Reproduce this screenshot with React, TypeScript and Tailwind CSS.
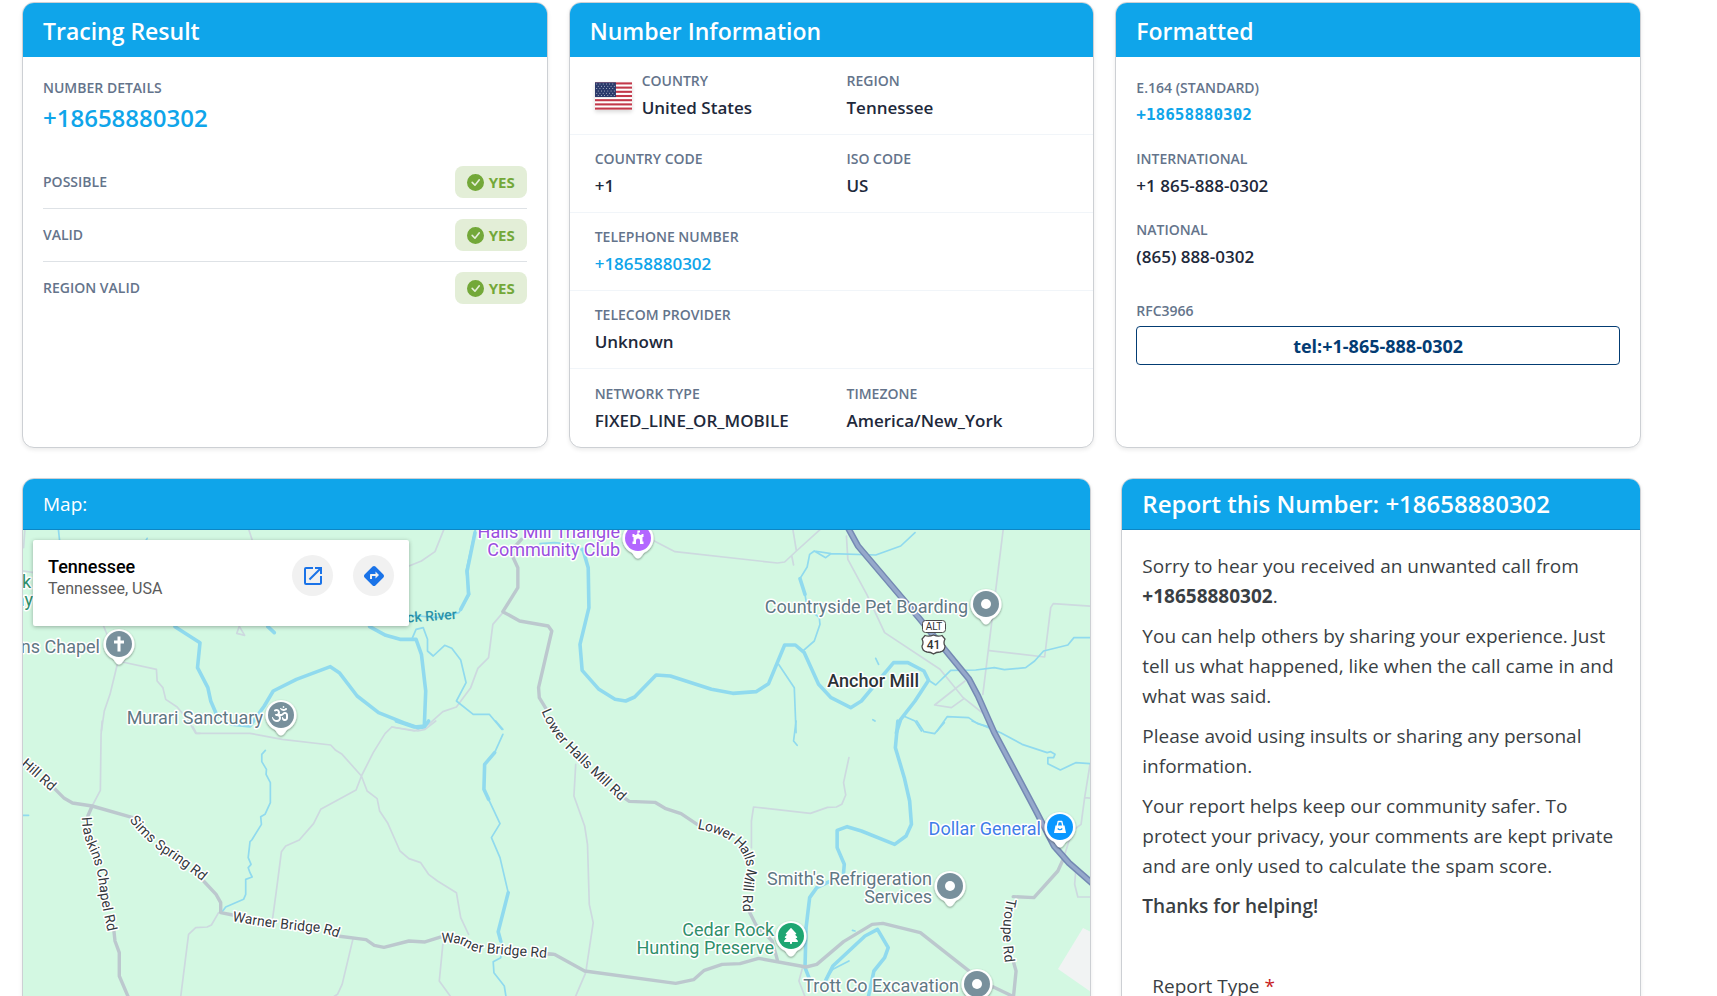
import type { ReactNode } from "react";
import { BsCheckCircleFill } from "react-icons/bs";
import { FaCross, FaOm, FaTree } from "react-icons/fa6";
import { MdDirections, MdOpenInNew } from "react-icons/md";

const PHONE = "+18658880302";

const card =
  "flex flex-col overflow-hidden rounded-xl border border-[#cdd0d4] bg-white shadow-[0_2px_4px_rgba(0,0,0,0.08)]";
const labelText = "text-sm leading-5 font-semibold text-[#64748b] uppercase";
const valueText = "text-[17px] leading-6 font-semibold text-[#1e293b]";

function CardTitle({ children }: { children: ReactNode }) {
  return (
    <h2 className="flex h-[54px] shrink-0 items-center bg-[#0fa5ea] px-5 pt-[2px] text-[23px] font-semibold text-white">
      {children}
    </h2>
  );
}

function CheckRow({ name, last }: { name: string; last?: boolean }) {
  return (
    <li
      className={
        last
          ? "flex items-center justify-between py-[10px]"
          : "flex items-center justify-between border-b border-[#dee2e6] py-[10px]"
      }
    >
      <span className={labelText}>{name}</span>
      <span className="flex h-8 items-center gap-[5px] rounded-lg bg-[#e3eed7] px-3 text-[15px] font-bold text-[#73a839]">
        <BsCheckCircleFill className="size-[17px]" />
        YES
      </span>
    </li>
  );
}

function Field({ name, children, link }: { name: string; children: ReactNode; link?: boolean }) {
  return (
    <div className="flex flex-col gap-[5px]">
      <dt className={labelText}>{name}</dt>
      <dd className={valueText}>
        {link ? (
          <a href={`tel:${PHONE}`} className="text-[#0fa5ea]">
            {children}
          </a>
        ) : (
          children
        )}
      </dd>
    </div>
  );
}

function InfoRow({ left, right, last }: { left: ReactNode; right?: ReactNode; last?: boolean }) {
  return (
    <div
      className={
        last
          ? "grid h-[78px] grid-cols-2 items-center"
          : "grid h-[78px] grid-cols-2 items-center border-b border-slate-100"
      }
    >
      <div className="pl-[25px]">{left}</div>
      <div className="pl-[15px]">{right}</div>
    </div>
  );
}

function Flag() {
  return (
    <svg
      viewBox="0 0 38 28"
      className="h-7 w-[37px] shrink-0 shadow-[0_2px_4px_rgba(0,0,0,0.15)]"
      role="img"
      aria-label="Flag of the United States"
    >
      <rect width="38" height="28" fill="#fff" />
      {[0, 1, 2, 3, 4, 5, 6].map((i) => (
        <rect key={i} y={i * 4.31} width="38" height="2.15" fill="#c2384a" />
      ))}
      <rect width="21.5" height="15.1" fill="#2b3a6b" />
      {[0, 1, 2, 3, 4, 5].map((r) =>
        [0, 1, 2, 3, 4, 5].map((c) => (
          <circle key={`${r}-${c}`} cx={1.8 + c * 3.3 + (r % 2) * 1.5} cy={1.6 + r * 2.4} r="0.5" fill="#fff" />
        )),
      )}
    </svg>
  );
}

function Pin({ x, y, color, children }: { x: number; y: number; color: string; children?: ReactNode }) {
  return (
    <g transform={`translate(${x} ${y})`}>
      <path
        d="M0 20.500C-2.500 20.500 -3.500 17.500 -6.500 14.500A15.500 15.500 0 1 1 6.500 14.500C3.500 17.500 2.500 20.500 0 20.500Z"
        fill="#fff"
        filter="url(#pinShadow)"
      />
      <circle r="13" fill={color} />
      {children ?? <circle r="5" fill="#fff" />}
    </g>
  );
}

type RoadName = { id: string; d: string; text: string };

const roadNames: RoadName[] = [
  { id: "r1", d: "M546 708Q554 728 567 742Q593 768 631 803", text: "Lower Halls Mill Rd" },
  { id: "r2", d: "M698 823Q728 828 742 843Q754 858 751 874Q746 890 749 920", text: "Lower Halls Mill Rd" },
  { id: "r3", d: "M87 816Q87 834 96 851Q104 872 105 892Q108 910 115 940", text: "Haskins Chapel Rd" },
  { id: "r4", d: "M133 816Q149 836 166 848Q186 860 213 883", text: "Sims Spring Rd" },
  { id: "r5", d: "M24 760L68 799", text: "Hill Rd" },
  { id: "r6", d: "M233 915Q275 923 318 926Q335 929 350 937", text: "Warner Bridge Rd" },
  { id: "r7", d: "M441 937Q456 936 464 939Q474 947 486 947L560 953", text: "Warner Bridge Rd" },
  { id: "r8", d: "M1012 898Q1004 934 1012 972", text: "Troupe Rd" },
];

/* Four sectors of the map, each traced on its own fine grid. */
const sectors = [
  {
    at: "translate(0 460) scale(0.35714 0.33333)",
    water: [
      "M163 200L167 240M408 240L412 232M1332 200L1305 330L1315 400L1285 455L1225 470L1140 462M1155 530L1165 505L1185 500L1197 535L1197 570L1213 585L1245 553L1265 562L1290 597L1305 665L1278 720L1325 760L1370 760L1405 805",
    ],
    river: [
      "M490 497L560 545L553 620L582 680L590 720L606 760L650 790L700 795L740 735L765 690L830 655L925 617L950 635L1000 705L1060 755L1130 785L1170 800L1188 798M1035 497L1080 523L1120 535L1165 535L1180 580L1192 690L1188 798M750 497L768 515M1330 215L1308 330L1312 400L1290 445",
    ],
    minor: [
      "M66 330L95 335M70 200L66 260M697 207L707 240M1243 205L1218 272L1180 300L1140 317M290 495L330 600L438 625L440 660L456 680L464 715L496 738L525 775L548 817L560 817M328 612L308 700L292 750L284 810M672 490L663 517L685 523L667 490M1408 455L1380 490L1368 590L1338 622L1318 680L1278 738L1240 752L1200 790L1160 810L1097 798",
    ],
    major: ["M1460 235L1430 270L1437 290L1450 320L1450 380L1408 452L1455 480L1535 495L1545 510L1508 680L1510 710L1530 745"],
  },
  {
    at: "translate(540 460) scale(0.35714 0.33333)",
    water: [
      "M1050 215L1010 255L940 282L815 278L768 270L755 280L748 318L728 353L742 400L748 440L782 470L784 490L768 540L738 568M768 270L800 290L815 278M668 610L712 680L717 815M1088 658L1108 672L1150 628L1220 627L1272 620L1300 626L1360 620L1385 600L1410 570L1478 552L1495 530L1545 530M1018 765L1050 780L1068 810M1112 810L1140 767L1200 770L1225 788L1265 800M940 592L948 610M932 776L938 780M0 248L40 245L95 250L120 270",
    ],
    river: [
      "M120 265L135 320L137 440L112 550L118 628L165 685L210 715L240 720L265 708L325 642L365 645L480 685L540 697L605 692L640 668L685 552L715 552L740 575L780 670L815 710L870 740L900 720L990 605L1030 605L1075 630L1088 658L1050 720L1010 775L998 815M728 353L742 400",
    ],
    minor: [
      "M320 240L378 272L665 306L685 303L718 270L785 205M708 205L718 270M705 285L710 312M858 225L862 295L915 400L965 515L1120 625L1185 710L1250 765M1297 205L1240 700M1545 436L1437 428L1430 440L1413 588L1258 569M1190 660L1105 732L1152 740L1188 712",
    ],
    major: [],
  },
  {
    at: "translate(0 720) scale(0.35714 0.33333)",
    water: [
      "M743 88L733 100L733 122L746 145L745 160L757 185L757 245L742 280L730 287L732 310L705 357L700 362L695 410L703 430L695 440L700 455L706 468L688 475L688 520L682 535L632 558L622 572M1388 0L1408 25M1408 40L1385 95L1357 130L1355 205L1400 308L1376 350L1400 410L1423 515L1395 632L1405 665L1402 710L1381 722L1383 755L1412 795L1418 835M62 283L80 283",
    ],
    river: ["M1385 95L1357 130L1355 205L1368 235M1423 515L1395 632L1402 660M1110 0L1160 18L1190 15L1200 0"],
    minor: [
      "M540 17L550 37L700 37L790 55L926 72L940 88L958 100L1012 165L1028 210L1056 233L1063 270L1085 305L1120 390L1145 413L1178 425L1200 460L1225 480L1278 515L1290 590L1312 640M286 0L283 40L281 208L258 255M1220 0L1190 25L1170 30L1097 18L1078 38L1045 95L1012 165L997 207L898 265L878 308L838 357L800 375L788 392L775 500L763 595M612 575L592 612L580 618L548 620L528 640L505 835M988 655L958 790L945 820L930 830M1240 670L1230 780L1265 832",
    ],
    major: [
      "M150 200L180 232L203 246L258 255L372 290M258 255L246 285M570 480L605 520L618 545L618 575L652 582M318 620L322 660L334 695L334 765L362 835M945 645L1025 656L1048 673L1075 679L1145 660L1190 663L1235 648M1520 697L1550 700",
    ],
  },
  {
    at: "translate(540 720) scale(0.35714 0.33333)",
    water: [
      "M717 0L710 60L720 73M1055 0L1075 32L1105 38L1132 5M1210 0L1290 35L1350 70L1420 95L1430 92L1442 100L1438 110L1422 110L1422 128L1457 147L1500 125L1545 128M865 720L820 745L810 760M875 628L882 630",
    ],
    river: [
      "M1002 0L995 80L1020 170L1035 240L1040 310L1025 345L993 370L900 330L860 317L832 328L832 380L852 430L850 455M810 482L775 500L755 530L745 620L742 740L755 775M800 778L820 735L910 645L945 625L975 680L965 710L935 750L918 835",
    ],
    minor: [
      "M100 130L95 225L125 315L133 370L138 550L149 605L128 755L96 835M865 110L850 185L856 222L845 250L830 258L805 259L757 277L598 258L592 300L592 380M1540 130L1525 230L1515 310L1490 330L1465 415M1525 230L1545 232M1500 450L1497 490L1506 528L1545 528M735 740L725 780L745 835",
    ],
    major: [
      "M0 697L40 700L125 750L380 787L430 776L460 748L510 730L560 728L612 712L745 738L775 730L850 662L930 610L960 607L1065 635L1225 770M1268 797L1322 825M235 230L250 241L322 244L350 262L395 278L440 310M585 570L605 612L650 660L665 718M1325 720L1333 750L1325 835M1465 415L1450 450L1383 530L1325 527",
    ],
  },
];

function MapDrawing() {
  const halo = { stroke: "#fff", strokeWidth: 3, paintOrder: "stroke", strokeLinejoin: "round" } as const;
  const slate = "#5f7884";
  return (
    <svg viewBox="23 529 1067 640" className="h-[640px] w-[1067px] max-w-none" role="img" aria-label="Map of Tennessee">
      <defs>
        <filter id="pinShadow" x="-30%" y="-30%" width="160%" height="160%">
          <feDropShadow dx="0" dy="1" stdDeviation="1" floodOpacity="0.45" />
        </filter>
        {roadNames.map((r) => (
          <path key={r.id} id={r.id} d={r.d} />
        ))}
      </defs>
      <path d="M1083 927L1091 931V991L1058 968Z" fill="#f1f3f3" />
      <g fill="none" strokeLinejoin="round" strokeLinecap="round">
        {sectors.map((s) => (
          <g key={s.at} transform={s.at}>
            {s.minor.map((d) => (
              <path key={d} d={d} stroke="#cdd9df" strokeWidth="1.7" vectorEffect="non-scaling-stroke" />
            ))}
            {s.water.map((d) => (
              <path key={d} d={d} stroke="#90daee" strokeWidth="1.7" vectorEffect="non-scaling-stroke" />
            ))}
            {s.river.map((d) => (
              <path key={d} d={d} stroke="#90daee" strokeWidth="3.6" vectorEffect="non-scaling-stroke" />
            ))}
          </g>
        ))}
        {sectors.map((s) => (
          <g key={s.at} transform={s.at}>
            {s.major.map((d) => (
              <path key={d} d={d} stroke="#bcc8ce" strokeWidth="3.4" vectorEffect="non-scaling-stroke" />
            ))}
          </g>
        ))}
        <g strokeLinecap="butt">
          <path d="M847 525L858 545L919 617L969 678L978 695L994 731L1036 810L1054 845L1069 862L1093 883" stroke="#7489b3" strokeWidth="6.500" />
          <path d="M847 525L858 545L919 617L969 678L978 695L994 731L1036 810L1054 845L1069 862L1093 883" stroke="#95a8cb" strokeWidth="3.500" />
        </g>
      </g>

      <g fontFamily="Roboto, sans-serif" fontWeight="400" {...halo}>
        <g fontSize="14" fill="#33383d">
          {roadNames.map((r) => (
            <text key={r.id} dy="5">
              <textPath href={`#${r.id}`}>{r.text}</textPath>
            </text>
          ))}
        </g>
        <g fontSize="18" textAnchor="end" fill={slate}>
          <text x="100" y="652">ns Chapel</text>
          <text x="263" y="723">Murari Sanctuary</text>
          <text x="968" y="612">Countryside Pet Boarding</text>
          <text x="932" y="884">Smith's Refrigeration</text>
          <text x="932" y="902">Services</text>
          <text x="959" y="991">Trott Co Excavation</text>
          <g fill="#9a4fe0">
            <text x="620" y="537">Halls Mill Triangle</text>
            <text x="620" y="555">Community Club</text>
          </g>
          <g fill="#2f8f6b">
            <text x="31" y="587">k</text>
            <text x="33" y="605">ay</text>
            <text x="774" y="935">Cedar Rock</text>
            <text x="774" y="953">Hunting Preserve</text>
          </g>
          <text x="1041" y="834" fill="#3f7de8">Dollar General</text>
          <text x="919" y="686" fill="#2c3236" fontWeight="500">Anchor Mill</text>
        </g>
        <text x="457" y="618" textAnchor="end" fontSize="14" fontWeight="500" fill="#2b93a8" stroke="none" transform="rotate(-4 457 618)">
          ck River
        </text>
      </g>

      <g fontFamily="Roboto, sans-serif" textAnchor="middle" fill="#333">
        <rect x="922.500" y="619.500" width="23" height="12" rx="3" fill="#fff" stroke="#4b4b4b" />
        <text x="934" y="629" fontSize="10">ALT</text>
        <path
          d="M925 634.500Q929 636 933.500 634Q938 636 942 634.500L945 638Q943 642 945 645Q945 650 940 651Q936 651 933.500 653Q931 651 927 651Q922 650 922 645Q924 642 922 638Z"
          fill="#fff"
          stroke="#4b4b4b"
          strokeWidth="1.300"
        />
        <text x="933.500" y="648" fontSize="12" fontWeight="500">41</text>
      </g>

      <Pin x={119} y={643} color="#78909c">
        <path d="M-1.500 -7.500H1.500V-3.500H5V-0.500H1.500V7.500H-1.500V-0.500H-5V-3.500H-1.500Z" fill="#fff" />
      </Pin>
      <Pin x={281} y={714} color="#78909c">
        <FaOm x={-9} y={-9} width={18} height={18} color="#fff" />
      </Pin>
      <Pin x={638} y={537} color="#b366ff">
        <path
          d="M-5.500 6V3.500H-4.500V-1H-5.500V-4H-3.500V-3H-1.500V-4H-0.600V-7.500H2V-5.500H0.600V-4H1.500V-3H3.500V-4H5.500V-1H4.500V3.500H5.500V6H2V2.500A2 2 0 0 0 -2 2.500V6Z"
          fill="#fff"
        />
      </Pin>
      <Pin x={986} y={603} color="#78909c" />
      <Pin x={1060} y={826} color="#0a97ff">
        <path d="M-4.500 -1.500H4.500L6 6H-6Z" fill="#fff" />
        <path d="M-2.800 -1L-1.800 -5.500H1.800L2.800 -1" fill="none" stroke="#fff" strokeWidth="1.300" strokeLinejoin="round" />
        <path d="M-2.300 1.500Q0 4 2.300 1.500" fill="none" stroke="#0a97ff" strokeWidth="1.200" />
      </Pin>
      <Pin x={950} y={885} color="#78909c" />
      <Pin x={791} y={935} color="#1ea672">
        <FaTree x={-8} y={-8} width={16} height={16} color="#fff" />
      </Pin>
      <Pin x={977} y={983} color="#78909c" />
    </svg>
  );
}

const roundButton = "flex size-[41px] items-center justify-center rounded-full bg-[#f1f1f1] text-[#1a73e8]";

export default function App() {
  return (
    <main className="flex h-screen flex-col gap-[30px] overflow-y-auto bg-white pt-[2px] pr-[76px] pl-[22px] font-['Open_Sans','Noto_Sans',sans-serif] [scrollbar-width:none]">
      <div className="grid shrink-0 grid-cols-3 gap-[21px]">
        <section className={card}>
          <CardTitle>Tracing Result</CardTitle>
          <div className="flex flex-col px-5 pt-[21px]">
            <h3 className={labelText}>Number Details</h3>
            <p className="text-2xl leading-10 font-semibold text-[#0fa5ea]">{PHONE}</p>
            <ul className="mt-[18px]">
              <CheckRow name="Possible" />
              <CheckRow name="Valid" />
              <CheckRow name="Region Valid" last />
            </ul>
          </div>
        </section>

        <section className={card}>
          <CardTitle>Number Information</CardTitle>
          <dl>
            <InfoRow
              left={
                <div className="flex items-center gap-[10px]">
                  <Flag />
                  <Field name="Country">United States</Field>
                </div>
              }
              right={<Field name="Region">Tennessee</Field>}
            />
            <InfoRow
              left={<Field name="Country Code">+1</Field>}
              right={<Field name="ISO Code">US</Field>}
            />
            <InfoRow
              left={
                <Field name="Telephone Number" link>
                  {PHONE}
                </Field>
              }
            />
            <InfoRow left={<Field name="Telecom Provider">Unknown</Field>} />
            <InfoRow
              left={<Field name="Network Type">FIXED_LINE_OR_MOBILE</Field>}
              right={<Field name="Timezone">America/New_York</Field>}
              last
            />
          </dl>
        </section>

        <section className={card}>
          <CardTitle>Formatted</CardTitle>
          <div className="flex flex-col px-5 pt-[21px]">
            <dl className="flex flex-col gap-[22px]">
              <div className="flex flex-col gap-[5px]">
                <dt className={labelText}>E.164 (Standard)</dt>
                <dd className="font-['DejaVu_Sans_Mono',monospace] text-base leading-6 font-bold text-[#0fa5ea]">
                  {PHONE}
                </dd>
              </div>
              <Field name="International">+1 865-888-0302</Field>
              <Field name="National">(865) 888-0302</Field>
            </dl>
            <h3 className={`${labelText} mt-8`}>RFC3966</h3>
            <a
              href="tel:+1-865-888-0302"
              className="mt-[5px] flex h-[39px] items-center justify-center rounded border border-[#033c73] text-lg font-bold text-[#033c73]"
            >
              tel:+1-865-888-0302
            </a>
          </div>
        </section>
      </div>

      <div className="grid shrink-0 grid-cols-3 gap-[30px]">
        <section className={`${card} relative col-span-2`}>
          <h2 className="flex h-[51px] shrink-0 items-center border-b border-[#0d86c4] bg-[#0fa5ea] px-5 text-[19px] text-white">
            Map:
          </h2>
          <div className="h-[640px] overflow-hidden bg-[#d3f8e2]">
            <MapDrawing />
          </div>
          <div className="absolute top-[61px] left-[10px] flex h-[86px] w-[376px] rounded-xs bg-white px-[15px] pt-[15px] font-['Roboto',sans-serif] shadow-[0_1px_4px_rgba(0,0,0,0.3)]">
            <div className="grow">
              <h3 className="text-lg leading-6 font-medium text-black">Tennessee</h3>
              <p className="text-base leading-5 text-[#5b5b5b]">Tennessee, USA</p>
            </div>
            <div className="flex gap-5">
              <a href="#map" aria-label="Open in Maps" className={roundButton}>
                <MdOpenInNew className="size-6" />
              </a>
              <a href="#directions" aria-label="Directions" className={roundButton}>
                <MdDirections className="size-6" />
              </a>
            </div>
          </div>
        </section>

        <section className={card}>
          <h2 className="flex h-[51px] shrink-0 items-center border-b border-[#0d86c4] bg-[#0fa5ea] px-5 text-2xl font-semibold whitespace-nowrap text-white">
            Report this Number: {PHONE}
          </h2>
          <div className="flex flex-col gap-[10px] px-5 pt-[21px] text-[19px] leading-[30px] text-[#3a3f44]">
            <p>
              Sorry to hear you received an unwanted call from <strong>{PHONE}</strong>.
            </p>
            <p>
              You can help others by sharing your experience. Just tell us what happened, like when the call
              came in and what was said.
            </p>
            <p>Please avoid using insults or sharing any personal information.</p>
            <p>
              Your report helps keep our community safer. To protect your privacy, your comments are kept
              private and are only used to calculate the spam score.
            </p>
            <p className="font-semibold">Thanks for helping!</p>
            <form className="mt-10 flex flex-col gap-2 px-[10px] pb-6">
              <label htmlFor="report-type" className="font-medium">
                Report Type <span className="text-[#c71c22]">*</span>
              </label>
              <select id="report-type" className="h-11 rounded border border-[#ced4da] bg-white px-3 text-base">
                <option></option>
              </select>
            </form>
          </div>
        </section>
      </div>
    </main>
  );
}
